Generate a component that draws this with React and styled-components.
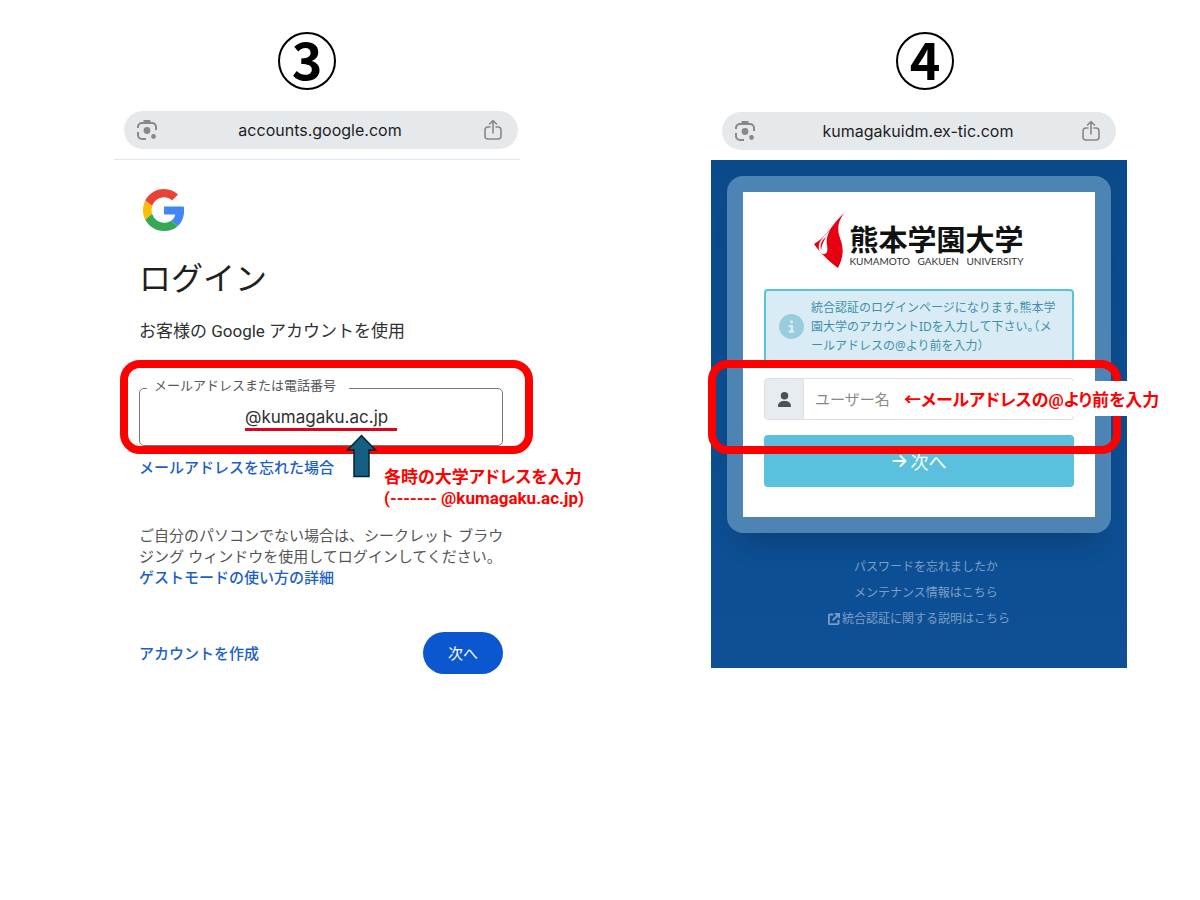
import React from 'react';
import styled, { createGlobalStyle } from 'styled-components';
import { FaArrowRight, FaArrowUpRightFromSquare, FaCircleInfo, FaUser } from 'react-icons/fa6';

const GlobalStyle = createGlobalStyle`
  * {
    box-sizing: border-box;
  }

  body {
    margin: 0;
    background: #fff;
    color: #1f1f1f;
    font-family: "Inter", "Noto Sans CJK JP", sans-serif;
  }

  button,
  input {
    font-family: inherit;
  }

  a {
    text-decoration: none;
  }
`;

const Page = styled.main`
  display: grid;
  grid-template-columns: minmax(0, 406fr) minmax(0, 416fr);
  gap: 191px;
  padding: 32px 73px 32px 114px;
`;

const Step = styled.section`
  display: flex;
  flex-direction: column;
`;

const StepHeader = styled.header`
  display: flex;
  justify-content: center;
  padding: ${(props) => props.$pad};
`;

const StepNumber = styled.h2`
  display: flex;
  align-items: center;
  justify-content: center;
  width: 58px;
  height: 58px;
  margin: 0;
  padding-bottom: 6px;
  border: 2px solid #000;
  border-radius: 50%;
  color: #000;
  font-family: "Noto Sans CJK JP", sans-serif;
  font-size: 52px;
  font-weight: 700;
  line-height: 48px;
`;

const AddressBar = styled.div`
  display: flex;
  align-items: center;
  justify-content: space-between;
  height: 38px;
  margin: ${(props) => props.$margin};
  padding: 0 14px 0 12px;
  border-radius: 19px;
  background: #e6e9ec;
  color: #1c1d1f;
  font-size: 16px;
`;

const BarIcon = styled.svg`
  width: 22px;
  height: 22px;
  fill: none;
  stroke: #85898c;
  stroke-width: 2;
  stroke-linejoin: round;
`;

/* step 3 */

const GoogleScreen = styled.div`
  padding: 29px 17px 0 25px;
  border-top: 1px solid #e4e6e8;
`;

const GoogleMark = styled.svg`
  display: block;
  width: 42px;
  height: 42px;
  margin: 0 4px;
`;

const Title = styled.h1`
  margin: 28px 0 20px;
  font-size: 32px;
  font-weight: 400;
  line-height: 40px;
`;

const Subtitle = styled.p`
  margin: 0 0 33px;
  color: #303030;
  font-family: "Roboto", "Noto Sans CJK JP", sans-serif;
  font-size: 17px;
  line-height: 24px;
`;

const FieldArea = styled.div`
  position: relative;
`;

const Fieldset = styled.fieldset`
  min-width: 0;
  margin: 0;
  padding: 0 7px 14px;
  border: 1px solid #777;
  border-radius: 5px;
`;

const Legend = styled.legend`
  padding: 0 13px 6px 7px;
  color: #555;
  font-size: 13px;
  line-height: 18px;
`;

const EmailInput = styled.input`
  display: block;
  width: 152px;
  height: 31px;
  margin: 0 auto;
  padding: 5px 0 0;
  border: 0;
  border-bottom: 3px solid #e5001a;
  outline: 0;
  background: transparent;
  color: #303030;
  font-size: 17px;
`;

const RedFrame = styled.div`
  position: absolute;
  inset: ${(props) => props.$inset};
  z-index: 1;
  border: 8px solid #f00;
  border-radius: 20px;
  pointer-events: none;
`;

const UpArrow = styled.svg`
  position: absolute;
  top: 58px;
  left: 207px;
  z-index: 2;
  width: 31px;
  height: 44px;
`;

const Note = styled.p`
  position: absolute;
  z-index: 2;
  margin: 0;
  color: #f00;
  font-family: "Roboto", "Noto Sans CJK JP", sans-serif;
  font-feature-settings: "palt";
  font-size: 17px;
  font-weight: 700;
  line-height: 21px;
  white-space: nowrap;
`;

const MailNote = styled(Note)`
  top: 91px;
  left: 245px;
`;

const UserNote = styled(Note)`
  top: 3px;
  left: 132px;
  padding: 9px 8px 5px;
  background: #fff;
`;

const BlueLink = styled.a`
  color: #1b5fc9;
  font-size: 15px;
  font-weight: 500;
  line-height: 21px;
`;

const ForgotRow = styled.div`
  display: flex;
  margin-top: 11px;
`;

const GuestText = styled.p`
  margin: 47px 0 44px;
  color: #555;
  font-size: 15px;
  line-height: 21px;
  white-space: nowrap;
`;

const Actions = styled.div`
  display: flex;
  align-items: center;
  justify-content: space-between;
`;

const NextPill = styled.button`
  width: 80px;
  height: 42px;
  padding: 0 0 2px;
  border: 0;
  border-radius: 21px;
  background: #0b57d0;
  color: #fff;
  font-size: 15px;
`;

/* step 4 */

const UniversityScreen = styled.div`
  padding: 16px 16px 39px;
  background: linear-gradient(#0b4a8a, #0d5096);
  font-family: "Noto Sans", "Noto Sans CJK JP", sans-serif;
  font-feature-settings: "halt";
`;

const Card = styled.div`
  padding: 16px;
  border-radius: 16px;
  background: #4e84b4;
  box-shadow: 0 22px 28px -14px rgba(0, 0, 0, 0.2);
`;

const CardBody = styled.form`
  padding: 21px 21px 30px;
  background: #fff;
`;

const Logo = styled.div`
  display: flex;
  justify-content: center;
  gap: 5px;
  margin-bottom: 20px;
`;

const Flame = styled.svg`
  width: 30px;
  height: 56px;
`;

const LogoText = styled.div`
  padding-top: 8px;
  color: #111;
`;

const LogoName = styled.div`
  font-family: "Noto Sans CJK JP", sans-serif;
  font-size: 29px;
  font-weight: 700;
  line-height: 34px;
`;

const LogoLatin = styled.div`
  display: flex;
  justify-content: space-between;
  color: #333;
  font-family: "Lato", sans-serif;
  font-size: 10px;
  line-height: 12px;
`;

const InfoBox = styled.div`
  display: flex;
  align-items: center;
  gap: 7px;
  padding: 7px 13px;
  border: 2px solid #5bc0de;
  border-radius: 4px;
  background: #d9ecf6;
  color: #3f8fa9;
  font-size: 12px;
  line-height: 19px;
  white-space: nowrap;

  svg {
    flex: none;
    width: 25px;
    height: 25px;
    color: #9acddc;
  }

  p {
    margin: 0;
  }
`;

const UserField = styled.div`
  position: relative;
  display: flex;
  height: 42px;
  margin: 14px 0 15px;
`;

const Addon = styled.label`
  display: flex;
  align-items: center;
  justify-content: center;
  width: 40px;
  border: 1px solid #dcdfe3;
  border-radius: 4px 0 0 4px;
  background: #e9ecef;
  color: #495057;
  font-size: 15px;
`;

const UserInput = styled.input`
  flex: 1;
  min-width: 0;
  padding: 0 11px;
  border: 1px solid #dcdfe3;
  border-left: 0;
  border-radius: 0 4px 4px 0;
  outline: 0;
  font-size: 15px;

  &::placeholder {
    color: #888;
  }
`;

const NextButton = styled.button`
  display: flex;
  align-items: center;
  justify-content: center;
  gap: 4px;
  width: 100%;
  height: 52px;
  border: 0;
  border-radius: 4px;
  background: #5bc0de;
  color: #fff;
  font-size: 18px;

  svg {
    width: 15px;
    height: 16px;
  }
`;

const LinkList = styled.nav`
  display: flex;
  flex-direction: column;
  align-items: center;
  gap: 5px;
  margin-top: 23px;
`;

const FooterLink = styled.a`
  display: flex;
  align-items: center;
  gap: 2px;
  color: #7d9fc6;
  font-size: 12px;
  line-height: 21px;
`;

const LinkIcon = styled.span`
  display: flex;
  width: 12px;

  svg {
    width: 12px;
    height: 12px;
    stroke: currentColor;
    stroke-width: 20px;
  }
`;

const LensIcon = () => (
  <BarIcon viewBox="0 0 22 22" aria-hidden="true">
    <path d="M2 9V8a4 4 0 0 1 4-4h10a4 4 0 0 1 4 4v3M2 13v3a4 4 0 0 0 4 4h4" />
    <path d="M7.5 2.5h7" strokeWidth="3" />
    <circle cx="11" cy="11.5" r="3.4" fill="#85898c" stroke="none" />
    <circle cx="17.5" cy="17.5" r="2.4" fill="#85898c" stroke="none" />
  </BarIcon>
);

const ShareIcon = () => (
  <BarIcon viewBox="0 0 22 22" aria-hidden="true">
    <path d="M8 8H6a3 3 0 0 0-3 3v6a3 3 0 0 0 3 3h10a3 3 0 0 0 3-3v-6a3 3 0 0 0-3-3h-2M11 14V2M7.5 5 11 1.5 14.5 5" strokeWidth="1.6" strokeLinecap="round" />
  </BarIcon>
);

const BrowserBar = ({ url, margin }) => (
  <AddressBar $margin={margin}>
    <LensIcon />
    <span>{url}</span>
    <ShareIcon />
  </AddressBar>
);

const GoogleStep = () => (
  <Step>
    <StepHeader $pad="0 20px 0 0">
      <StepNumber>3</StepNumber>
    </StepHeader>
    <BrowserBar url="accounts.google.com" margin="21px 2px 10px 10px" />
    <GoogleScreen>
      <GoogleMark viewBox="0 0 48 48" role="img" aria-label="Google">
        <path fill="#EA4335" d="M24 9.5c3.54 0 6.71 1.22 9.21 3.6l6.85-6.85C35.9 2.38 30.47 0 24 0 14.62 0 6.51 5.38 2.56 13.22l7.98 6.19C12.43 13.72 17.74 9.5 24 9.5z" />
        <path fill="#4285F4" d="M46.98 24.55c0-1.57-.15-3.09-.38-4.55H24v9.02h12.94c-.58 2.96-2.26 5.48-4.78 7.18l7.73 6c4.51-4.18 7.09-10.36 7.09-17.65z" />
        <path fill="#FBBC05" d="M10.53 28.59c-.48-1.45-.76-2.99-.76-4.59s.27-3.14.76-4.59l-7.98-6.19C.92 16.46 0 20.12 0 24c0 3.88.92 7.54 2.56 10.78l7.97-6.19z" />
        <path fill="#34A853" d="M24 48c6.48 0 11.93-2.13 15.89-5.81l-7.73-6c-2.15 1.45-4.92 2.3-8.16 2.3-6.26 0-11.57-4.22-13.47-9.91l-7.98 6.19C6.51 42.62 14.62 48 24 48z" />
      </GoogleMark>
      <Title>ログイン</Title>
      <Subtitle>お客様の Google アカウントを使用</Subtitle>
      <FieldArea>
        <Fieldset>
          <Legend>
            <label htmlFor="email">メールアドレスまたは電話番号</label>
          </Legend>
          <EmailInput id="email" type="text" defaultValue="@kumagaku.ac.jp" />
        </Fieldset>
        <RedFrame $inset="-16px -30px -8px -19px" />
        <UpArrow viewBox="0 0 31 44" aria-hidden="true">
          <path d="M15.5 1.500 29.500 16H23v26.500H8V16H1.500z" fill="#156082" stroke="#042433" strokeWidth="1.500" />
        </UpArrow>
        <MailNote>
          各時の大学アドレスを入力
          <br />
          (------- @kumagaku.ac.jp)
        </MailNote>
      </FieldArea>
      <ForgotRow>
        <BlueLink href="#forgot">メールアドレスを忘れた場合</BlueLink>
      </ForgotRow>
      <GuestText>
        ご自分のパソコンでない場合は、シークレット ブラウ
        <br />
        ジング ウィンドウを使用してログインしてください。
        <br />
        <BlueLink href="#guest">ゲストモードの使い方の詳細</BlueLink>
      </GuestText>
      <Actions>
        <BlueLink href="#create">アカウントを作成</BlueLink>
        <NextPill type="button">次へ</NextPill>
      </Actions>
    </GoogleScreen>
  </Step>
);

const UniversityStep = () => (
  <Step>
    <StepHeader $pad="0 0 0 12px">
      <StepNumber>4</StepNumber>
    </StepHeader>
    <BrowserBar url="kumagakuidm.ex-tic.com" margin="22px 11px 10px" />
    <UniversityScreen>
      <Card>
        <CardBody>
          <Logo>
            <Flame viewBox="0 0 30 56" aria-hidden="true">
              <path fill="#e60012" d="M30 0C25 7 23 14 25 22c3 9 7 17-1 33C17 50 7 41 0 31 13 24 19 10 30 0z" />
              <path fill="#fff" d="M16 17c-3 6-4 10-3 15 1 6 0 9-3 9-4 0-6-4-5-9 1-6 6-9 11-15z" />
              <path fill="#e60012" d="M12 24c-5 4-6 8-5 13 1-5 2-8 5-13z" />
            </Flame>
            <LogoText>
              <LogoName>熊本学園大学</LogoName>
              <LogoLatin>
                <span>KUMAMOTO</span>
                <span>GAKUEN</span>
                <span>UNIVERSITY</span>
              </LogoLatin>
            </LogoText>
          </Logo>
          <InfoBox>
            <FaCircleInfo />
            <p>
              統合認証のログインページになります。熊本学
              <br />
              園大学のアカウントIDを入力して下さい。（メ
              <br />
              ールアドレスの@より前を入力）
            </p>
          </InfoBox>
          <UserField>
            <Addon htmlFor="user" aria-label="ユーザー名">
              <FaUser />
            </Addon>
            <UserInput id="user" type="text" placeholder="ユーザー名" />
            <RedFrame $inset="-18px -47px -34px -56px" />
            <UserNote>←メールアドレスの@より前を入力</UserNote>
          </UserField>
          <NextButton type="button">
            <FaArrowRight />
            次へ
          </NextButton>
        </CardBody>
      </Card>
      <LinkList>
        <FooterLink href="#password">
          <LinkIcon />
          パスワードを忘れましたか
        </FooterLink>
        <FooterLink href="#maintenance">
          <LinkIcon />
          メンテナンス情報はこちら
        </FooterLink>
        <FooterLink href="#about">
          <LinkIcon>
            <FaArrowUpRightFromSquare />
          </LinkIcon>
          統合認証に関する説明はこちら
        </FooterLink>
      </LinkList>
    </UniversityScreen>
  </Step>
);

const App = () => {
  return (
    <>
      <GlobalStyle />
      <Page>
        <GoogleStep />
        <UniversityStep />
      </Page>
    </>
  );
};

export default App;
